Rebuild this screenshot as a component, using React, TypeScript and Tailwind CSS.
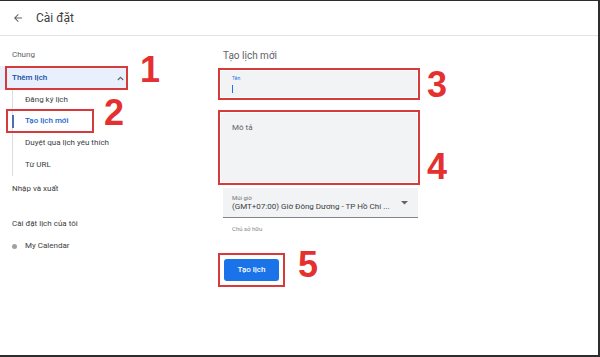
import React from 'react'

function Num({ children, className }: { children: React.ReactNode; className: string }) {
  // annotation digits drawn over the screenshot
  return (
    <span
      className={`absolute text-[36px] leading-none font-bold text-[#e4312f] font-['Liberation_Sans',Arial,sans-serif] ${className}`}
    >
      {children}
    </span>
  )
}

function Sidebar() {
  return (
    <aside className="w-[218px] shrink-0 pt-[8px] flex flex-col text-[8px] text-[#3c4043]">
      <div className="h-[22px] pl-[12px] flex items-center text-[#5f6368]">Chung</div>

      <div className="relative w-[128px] h-[24px] bg-[#e8f0fe] flex items-center justify-between pl-[12px] pr-[4px] font-medium text-[#174ea6]">
        <span>Thêm lịch</span>
        <svg width="7" height="5" viewBox="0 0 7 5" fill="none">
          <path d="M0.8 4L3.5 1.3L6.2 4" stroke="#5f6368" strokeWidth="1.1" />
        </svg>
        <div className="absolute inset-y-0 left-[5px] right-0 border-2 border-[#d63a3a]" />
        <Num className="left-[140px] top-[-14px]">1</Num>
      </div>

      <div className="ml-[12px] border-l border-[#dadce0] flex flex-col">
        <div className="h-[20px] pl-[12px] flex items-center">Đăng ký lịch</div>
        <div className="relative h-[22px] pl-[12px] flex items-center font-medium text-[#1967d2]">
          <span className="absolute left-[-1px] top-[5px] bottom-[4px] w-[2px] bg-[#4a6fb5]" />
          Tạo lịch mới
          <div className="absolute top-[-1px] bottom-[-1px] left-[-7px] w-[88px] border-2 border-[#d63a3a]" />
          <Num className="left-[91px] top-[-15px]">2</Num>
        </div>
        <div className="h-[22px] pl-[12px] flex items-center">Duyệt qua lịch yêu thích</div>
        <div className="h-[22px] pl-[12px] flex items-center">Từ URL</div>
      </div>

      <div className="mt-[2px] h-[22px] pl-[12px] flex items-center">Nhập và xuất</div>
      <div className="mt-[13px] h-[22px] pl-[12px] flex items-center">Cài đặt lịch của tôi</div>
      <div className="h-[22px] pl-[12px] flex items-center gap-[8px]">
        <span className="w-[5px] h-[5px] rounded-full bg-[#a0a0a0]" />
        My Calendar
      </div>
    </aside>
  )
}

function NewCalendarForm() {
  return (
    <main className="w-[202px] pt-[9px] flex flex-col text-[#3c4043]">
      <div className="h-[20px] pl-[5px] flex items-center text-[10px] text-[#5f6368]">Tạo lịch mới</div>

      <div className="relative mt-[3px] h-[32px] border-2 border-[#d63a3a] p-[1px]">
        <div className="h-full bg-[#f1f3f4] pl-[11px] pt-[3px]">
          <div className="text-[5px] leading-[8px] text-[#1a73e8]">Tên</div>
          <div className="mt-[3px] w-px h-[8px] bg-[#1a73e8]" />
        </div>
        <Num className="left-[207px] top-[-3px]">3</Num>
      </div>

      <div className="relative mt-[10px] h-[75px] border-2 border-[#d63a3a] p-[1px]">
        <div className="h-full bg-[#f1f3f4] pl-[11px] pt-[10px]">
          <div className="text-[8px] leading-[10px] text-[#5f6368]">Mô tả</div>
        </div>
        <Num className="left-[207px] top-[37px]">4</Num>
      </div>

      <div className="mt-[3px] ml-[5px] w-[195px] h-[30px] bg-[#f1f3f4] border-b border-[#80868b] flex items-center justify-between pl-[9px] pr-[10px]">
        <div className="flex flex-col">
          <span className="text-[6px] leading-[7px] text-[#70757a]">Múi giờ</span>
          <span className="mt-[1px] text-[8px] leading-[10px] whitespace-nowrap">
            (GMT+07:00) Giờ Đông Dương - TP Hồ Chí ...
          </span>
        </div>
        <svg width="7" height="4" viewBox="0 0 7 4">
          <path d="M0 0H7L3.5 3.6Z" fill="#5f6368" />
        </svg>
      </div>

      <div className="mt-[7px] pl-[14px] text-[6px] leading-[8px] text-[#80868b]">Chủ sở hữu</div>

      <div className="relative mt-[20px] w-[67px] h-[34px] border-2 border-[#d63a3a] p-[4px]">
        <button className="w-[55px] h-[22px] rounded-[3px] bg-[#1a73e8] text-white text-[8px] font-medium flex items-center justify-center">
          Tạo lịch
        </button>
        <Num className="left-[78px] top-[-8px]">5</Num>
      </div>
    </main>
  )
}

export default function App() {
  return (
    <div className="w-[600px] h-[357px] overflow-hidden bg-white border-t border-r-2 border-b-2 border-[#2d2d2d] flex flex-col font-['Roboto','Noto_Sans',sans-serif]">
      <header className="h-[35px] shrink-0 border-b border-[#e3e3e3] flex items-center pl-[12px] gap-[12px]">
        <svg width="12" height="12" viewBox="0 0 24 24">
          <path d="M20 11H7.83l5.59-5.59L12 4l-8 8 8 8 1.41-1.41L7.83 13H20v-2z" fill="#5f6368" />
        </svg>
        <span className="text-[12px] text-[#3c4043]">Cài đặt</span>
      </header>
      <div className="flex flex-1">
        <Sidebar />
        <NewCalendarForm />
      </div>
    </div>
  )
}
